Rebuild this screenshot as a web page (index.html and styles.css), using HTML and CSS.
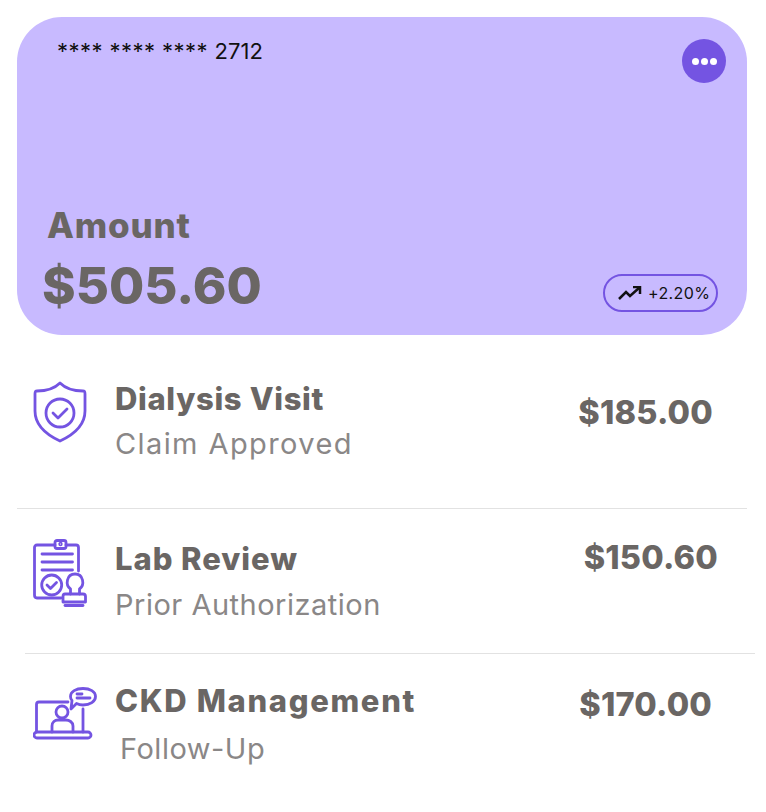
FILE: index.html
```html
<!DOCTYPE html>
<html lang="en">
<head>
    <meta charset="UTF-8">
    <meta name="viewport" content="width=device-width, initial-scale=1.0">
    <title>Claims</title>
    <link rel="stylesheet" href="styles.css">
</head>
<body>
    <div class="balance-card">
        <div class="card-top">
            <p class="card-number">**** **** **** <span>2712</span></p>
            <button class="more-button" aria-label="More">
                <span></span><span></span><span></span>
            </button>
        </div>
        <p class="amount-label">Amount</p>
        <div class="card-bottom">
            <p class="amount-value">$505.60</p>
            <div class="trend-pill">
                <svg class="trend-icon" viewBox="0 0 24 14" width="24" height="14">
                    <path d="M1 13 L8 6 L12 10 L21 2" />
                    <path d="M15 1 H22 V8" />
                </svg>
                <span>+2.20%</span>
            </div>
        </div>
    </div>

    <ul class="claim-list">
        <li class="claim-item claim-dialysis">
            <svg class="claim-icon" viewBox="0 0 54 62" width="54" height="62">
                <path d="M27 2 C32 7 40 10 50 10 C52 10 52 11 52 13 V30 C52 45 40 54 27 60 C14 54 2 45 2 30 V13 C2 11 2 10 4 10 C14 10 22 7 27 2 Z" />
                <circle cx="27" cy="32" r="14" />
                <path d="M20 32 L25 37 L34 28" />
            </svg>
            <div class="claim-text">
                <h3>Dialysis Visit</h3>
                <p>Claim Approved</p>
            </div>
            <span class="claim-price">$185.00</span>
        </li>
        <li class="claim-item claim-lab">
            <svg class="claim-icon" viewBox="0 0 54 68" width="54" height="68">
                <path d="M22 6 H4 C2.500 6 1.500 7 1.500 8.500 V56 C1.500 58 2.500 59 4 59 H28" />
                <path d="M33 6 H43 C44.500 6 45.500 7 45.500 8.500 V32" />
                <rect x="22" y="1.500" width="11" height="8" rx="2" />
                <circle cx="27.500" cy="5" r="0.800" />
                <path d="M9 15 H39.500 M9 23 H39.500 M9 31 H39.500" />
                <circle cx="18.700" cy="46" r="10" />
                <path d="M14 46 L17.500 49.500 L23.500 43.500" />
                <path d="M37.500 55 V50 C32 46 33.500 35 42 35 C50.500 35 52 46 46.500 50 V55" />
                <path d="M32 55 H50 C51.500 55 52.500 56 52.500 57.500 V63 H30 V57.500 C30 56 30.500 55 32 55 Z" />
                <path d="M32 66.500 H50" />
            </svg>
            <div class="claim-text">
                <h3>Lab Review</h3>
                <p>Prior Authorization</p>
            </div>
            <span class="claim-price">$150.60</span>
        </li>
        <li class="claim-item claim-ckd">
            <svg class="claim-icon" viewBox="0 0 64 53" width="64" height="53">
                <path d="M35 15 H6 C4.500 15 3.500 16 3.500 17.500 V45" />
                <path d="M50 22 V45" />
                <rect x="1" y="45" width="57" height="6" rx="3" />
                <circle cx="29" cy="25" r="6" />
                <path d="M19 45 V39 C19 35 22 33 25 33 H33 C36 33 40 35 40 39 V45" />
                <path d="M50 1.500 C57 1.500 62.500 4.500 62.500 9.500 C62.500 14.500 57 18 50 18 C47.500 18 45.500 17.500 43.500 16.500 L38 22 L39 13.500 C38 12.500 37.500 11 37.500 9.500 C37.500 4.500 43 1.500 50 1.500 Z" />
                <path d="M44 7 H49 M44 11 H57" />
            </svg>
            <div class="claim-text">
                <h3>CKD Management</h3>
                <p>Follow-Up</p>
            </div>
            <span class="claim-price">$170.00</span>
        </li>
    </ul>
</body>
</html>
```

FILE: styles.css
```css
* {
    margin: 0;
    padding: 0;
    box-sizing: border-box;
    font-family: 'Inter', 'Noto Sans', sans-serif;
}
body {
    background-color: white;
    color: #6a6664;
    padding: 17px 0 0 17px;
    width: 766px;
    overflow-x: hidden;
}
.balance-card {
    width: 730px;
    height: 318px;
    background-color: #c8baff;
    border-radius: 45px;
    padding: 22px 21px 0 26px;
}
.card-top {
    display: flex;
    justify-content: space-between;
    align-items: flex-start;
    height: 160px;
}
.card-number {
    margin: -1px 0 0 14px;
    font-size: 22px;
    line-height: 26px;
    letter-spacing: 0.45px;
    color: #111;
}
.card-number span {
    letter-spacing: 0;
}
.more-button {
    width: 44px;
    height: 44px;
    border: none;
    border-radius: 50%;
    background-color: #7454e2;
    display: flex;
    align-items: center;
    justify-content: center;
    gap: 2px;
}
.more-button span {
    width: 7px;
    height: 7px;
    border-radius: 50%;
    background-color: white;
}
.amount-label {
    margin: 4px 0 0 4px;
    font-size: 35px;
    line-height: 44px;
    font-weight: 800;
    letter-spacing: 0.8px;
}
.card-bottom {
    display: flex;
    justify-content: space-between;
    align-items: flex-end;
    margin: 7px 0 0 -1px;
}
.amount-value {
    font-size: 51px;
    line-height: 64px;
    font-weight: 800;
}
.trend-pill {
    display: flex;
    align-items: center;
    gap: 6px;
    width: 115px;
    height: 38px;
    margin: 0 8px 6px 0;
    padding-left: 13px;
    border: 2px solid #7454e2;
    border-radius: 19px;
    font-size: 16px;
    letter-spacing: 0.4px;
    color: #111;
}
.trend-icon {
    fill: none;
    stroke: #111;
    stroke-width: 2.5;
}
.claim-list {
    list-style-type: none;
}
.claim-item {
    display: flex;
    width: 730px;
    padding-left: 16px;
    border-bottom: 1px solid #e2e2e2;
}
.claim-dialysis {
    height: 174px;
    padding-top: 46px;
}
.claim-lab {
    height: 145px;
    padding-top: 30px;
    margin-left: 8px;
    padding-left: 8px;
}
.claim-ckd {
    padding-top: 33px;
    border-bottom: none;
}
.claim-icon {
    flex-shrink: 0;
    fill: none;
    stroke: #7454e2;
    stroke-width: 2.8;
    stroke-linejoin: round;
    stroke-linecap: round;
}
.claim-text {
    flex-grow: 1;
    margin-left: 28px;
}
.claim-text h3 {
    font-size: 31px;
    line-height: 40px;
    font-weight: 800;
    letter-spacing: 0.65px;
}
.claim-text p {
    margin-top: 6px;
    font-size: 29px;
    line-height: 36px;
    letter-spacing: 0.5px;
    color: #8a8787;
}
.claim-price {
    margin: 12px 34px 0 0;
    font-size: 32.5px;
    line-height: 40px;
    font-weight: 800;
    letter-spacing: 0.2px;
}

/* per row nudges */
.claim-dialysis .claim-text {
    margin-top: -2px;
}
.claim-dialysis .claim-text p {
    margin-top: 7px;
    letter-spacing: 1.4px;
}
.claim-lab .claim-text h3 {
    letter-spacing: 0.95px;
}
.claim-lab .claim-text p {
    margin-top: 8px;
}
.claim-lab .claim-price {
    margin: -1px 37px 0 0;
}
.claim-ckd .claim-text {
    margin: -6px 0 0 18px;
}
.claim-ckd .claim-text h3 {
    letter-spacing: 1.65px;
}
.claim-ckd .claim-text p {
    margin: 10px 0 0 5px;
}
.claim-ckd .claim-price {
    margin: -2px 35px 0 0;
}
```
